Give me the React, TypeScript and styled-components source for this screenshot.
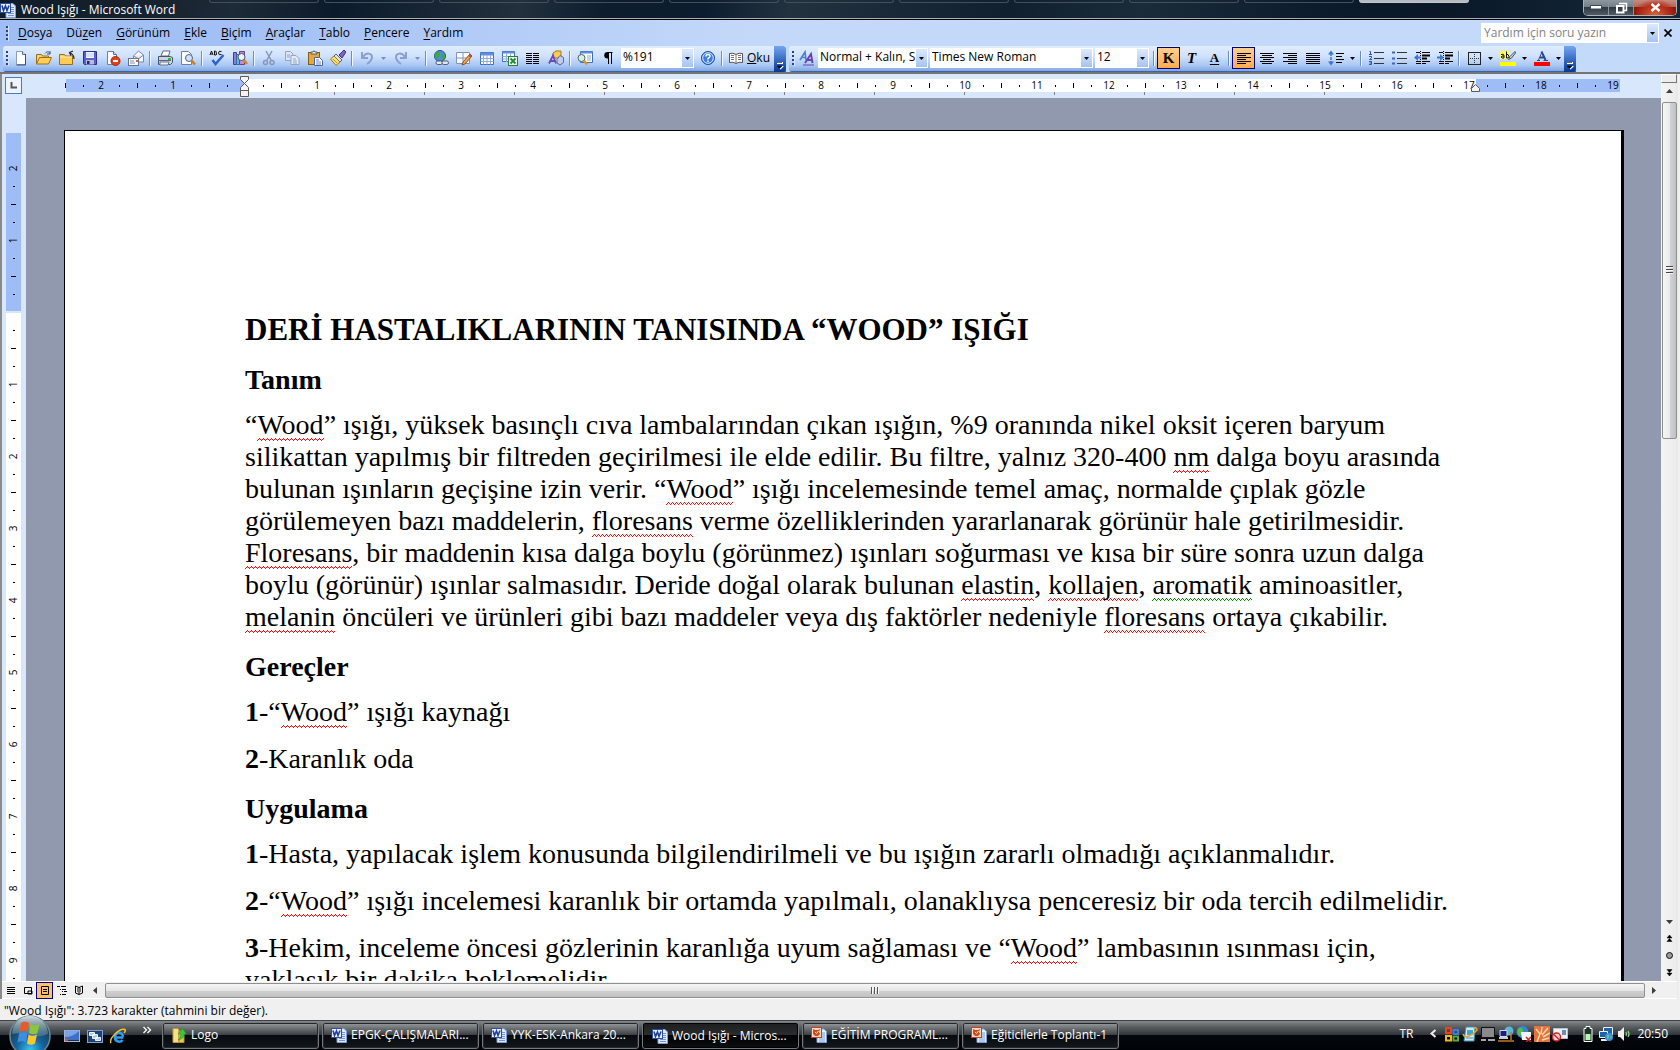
import React from "react";
import styled, { createGlobalStyle, css } from "styled-components";

const uiFont = '"Open Sans", "Noto Sans", sans-serif';
const docFont = '"Liberation Serif", "Times New Roman", serif';

const GlobalStyle = createGlobalStyle`
  *, *::before, *::after { box-sizing: border-box; }
  html, body { margin: 0; height: 100%; }
  body { font: 12px/16px ${uiFont}; color: #000; overflow: hidden; }
  button, input, select { font: inherit; color: inherit; margin: 0; padding: 0; border: 0; border-radius: 0; background: none; }
`;

const Desktop = styled.div`
  display: flex;
  flex-direction: column;
  height: 100vh;
  background: #f0f0f0;
`;

/* ---------- title bar ---------- */

const TitleBar = styled.header`
  display: flex;
  flex: none;
  height: 20px;
  align-items: flex-start;
  justify-content: space-between;
  border-bottom: 1px solid #000;
  box-shadow: inset 0 -1px #a4adb4;
  background: linear-gradient(100deg, #101c28 0, #16232f 9%, #1d2a37 14%, #0c1b2b 20%, #22303d 31%, #0d1d2e 36%, #0c1d2f 42%, #23323f 47%, #1a2937 53%, #10202f 60%, #1a2b39 68%, #0c1c2d 78%, #0a1828 86%, #16293a 100%);
`;

const TitleText = styled.h1`
  display: flex;
  align-items: center;
  gap: 5px;
  width: 209px;
  height: 19px;
  margin: 0;
  padding-top: 1px;
  font-size: 12px;
  line-height: 18px;
  font-weight: 400;
  color: #fff;
  white-space: nowrap;
`;

const GhostTabs = styled.div`
  display: flex;
  flex: 1;
  gap: 5px;
  overflow: hidden;
`;

const GhostTab = styled.span<{ $lit?: boolean }>`
  flex: 0 0 110px;
  height: 3px;
  border: 1px solid ${(p) => (p.$lit ? "#c3c8cc" : "#42505c")};
  border-top: 0;
  border-radius: 0 0 4px 4px;
  background: ${(p) => (p.$lit ? "#b4bac0" : "none")};
`;

const WindowButtons = styled.div`
  display: flex;
  margin-right: 3px;
  border: 1px solid #aab0b5;
  border-top: 0;
  border-radius: 0 0 5px 5px;
  overflow: hidden;
`;

const WindowButton = styled.button<{ $close?: boolean }>`
  display: flex;
  align-items: center;
  justify-content: center;
  width: ${(p) => (p.$close ? 42 : 25)}px;
  height: 15px;
  border-right: 1px solid #8b939a;
  background: ${(p) =>
    p.$close
      ? "radial-gradient(ellipse at 50% 100%, #e0633a 0, #b3301a 45%, transparent 75%), linear-gradient(#c98a80 0, #b3665b 45%, #8c1808 50%, #8a1406 100%)"
      : "linear-gradient(#8d979f 0, #737e87 45%, #2d3943 50%, #4f5b65 100%)"};
  &:last-child { border-right: 0; }
`;

/* ---------- menu ---------- */

const MenuBar = styled.nav`
  display: flex;
  flex: none;
  align-items: center;
  height: 26px;
  padding: 0 4px 0 6px;
  background: linear-gradient(90deg, #9ebef5 0, #a3c1f6 15%, #c4d9f9 45%, #c4dafa 100%);
`;

const Grip = styled.span`
  flex: none;
  width: 3px;
  height: 15px;
  background: repeating-linear-gradient(#27418e 0 2px, transparent 2px 4px);
  border-right: 1px solid #d5e4fb;
`;

const MenuList = styled.ul`
  display: flex;
  flex: 1;
  margin: 0;
  padding: 0 0 0 2px;
  list-style: none;
`;

const MenuItem = styled.button`
  padding: 0 7px;
  line-height: 20px;
  u { text-underline-offset: 2px; }
`;

const HelpBox = styled.label`
  display: flex;
  width: 178px;
  height: 20px;
  padding: 1px;
  background: #fff;
`;

const HelpInput = styled.input`
  flex: 1;
  min-width: 0;
  padding-left: 2px;
  outline: 0;
  &::placeholder { color: #838383; opacity: 1; }
`;

const CloseDoc = styled.button`
  display: flex;
  align-items: center;
  justify-content: center;
  width: 17px;
  height: 20px;
`;

/* ---------- toolbars ---------- */

const ToolbarRow = styled.div`
  display: flex;
  flex: none;
  height: 28px;
  padding-left: 3px;
  gap: 3px;
  background: linear-gradient(90deg, #a3c1f6, #c4dafa 50%);
  border-bottom: 2px solid #747474;
`;

const Toolbar = styled.div`
  display: flex;
  align-items: center;
  height: 26px;
  padding: 0 0 2px 3px;
  border-radius: 3px 0 0 3px;
  background: linear-gradient(#e0edff 0, #cfe1fc 40%, #a9c7f4 75%, #83a8e2 95%, #3a62ad 96%);
`;

const ToolButton = styled.button<{ $on?: boolean; $w?: number }>`
  display: flex;
  flex: none;
  align-items: center;
  justify-content: center;
  gap: 4px;
  width: ${(p) => p.$w ?? 23}px;
  height: 22px;
  ${(p) =>
    p.$on &&
    css`
      border: 1px solid #000080;
      background: linear-gradient(#ffd08d, #ffab4f);
    `}
`;

const DropButton = styled(ToolButton)`
  width: 11px;
`;

const Separator = styled.span`
  flex: none;
  width: 2px;
  height: 15px;
  margin: 0 2px;
  background: linear-gradient(90deg, #6a8ccb 50%, #f1f7ff 50%);
`;

const Options = styled.button`
  display: flex;
  flex: none;
  align-items: flex-end;
  align-self: flex-start;
  justify-content: center;
  width: 12px;
  height: 26px;
  padding-bottom: 2px;
  border-radius: 0 3px 3px 0;
  background: linear-gradient(#75a6f1, #3b6cc4 50%, #053995);
`;

const Combo = styled.label<{ $w: number; $lead?: boolean }>`
  display: grid;
  flex: none;
  grid-template-columns: 1fr 11px;
  align-items: center;
  width: ${(p) => p.$w}px;
  height: 20px;
  margin: 0 2px 0 ${(p) => (p.$lead ? 2 : 0)}px;
  padding: 1px;
  background: #fff;
  select, span { grid-row: 1; }
  select {
    grid-column: 1 / 3;
    width: 100%;
    height: 18px;
    padding: 0 11px 2px 1px;
    appearance: none;
    outline: 0;
    text-overflow: clip;
    text-align: left;
  }
`;

const ArrowBox = styled.span`
  display: flex;
  grid-column: 2;
  align-items: center;
  justify-content: center;
  width: 11px;
  height: 18px;
  background: linear-gradient(#dbe9fd, #a6c4f0);
  pointer-events: none;
`;

const SerifGlyph = styled.span<{ $style: "bold" | "italic" | "underline" }>`
  font: ${(p) => (p.$style === "italic" ? "italic" : "normal")} 700 ${(p) => (p.$style === "underline" ? 13 : 15)}px/18px
    ${docFont};
  text-decoration: ${(p) => (p.$style === "underline" ? "underline" : "none")};
  text-underline-offset: 2px;
`;

/* ---------- workspace ---------- */

const Workspace = styled.main`
  display: flex;
  flex: 1;
  min-height: 0;
  border-left: 2px solid #8a8a8a;
`;

const WorkColumn = styled.div`
  display: flex;
  flex: 1;
  flex-direction: column;
  min-width: 0;
`;

const RulerRow = styled.div`
  display: flex;
  flex: none;
  height: 24px;
  padding-top: 3px;
  background: #d8e7fc;
`;

const TabSelector = styled.button`
  flex: none;
  width: 17px;
  height: 17px;
  margin: 0 0 0 3px;
  border: 1px solid #4b78c8;
  background: #eef4fe;
  display: flex;
  align-items: center;
  justify-content: center;
`;

const HRuler = styled.div`
  position: relative;
  display: flex;
  width: 1560px;
  height: 18px;
  margin-left: 42px;
  padding-bottom: 5px;
  align-items: center;
  font: 10px/13px ${uiFont};
  background:
    repeating-linear-gradient(90deg, #808080 0 1px, transparent 1px 90px) 270px 15px / 1080px 3px no-repeat,
    linear-gradient(90deg, #9ebcf5 179px, #fff 179px 1410px, #9ebcf5 1410px) 2px 2px / 1554px 13px no-repeat;
`;

const Slots = styled.div<{ $vertical?: boolean }>`
  display: flex;
  flex-direction: ${(p) => (p.$vertical ? "column" : "row")};
  ${(p) => (p.$vertical ? "padding-top: 26px;" : "margin-left: -8px; padding-top: 4px;")}
`;

const Slot = styled.span<{ $vertical?: boolean }>`
  display: flex;
  flex: none;
  align-items: center;
  justify-content: center;
  width: ${(p) => (p.$vertical ? 15 : 18)}px;
  height: ${(p) => (p.$vertical ? 18 : 13)}px;
  b { font-weight: 400; ${(p) => p.$vertical && "transform: rotate(-90deg);"} }
`;

const Tick = styled.i<{ $long?: boolean; $vertical?: boolean }>`
  background: #000;
  width: ${(p) => (p.$vertical ? (p.$long ? 5 : 2) : 1)}px;
  height: ${(p) => (p.$vertical ? 1 : p.$long ? 5 : 2)}px;
`;

const Marker = styled.svg<{ $x: number; $y: number }>`
  position: absolute;
  left: ${(p) => p.$x}px;
  top: ${(p) => p.$y}px;
`;

const BodyRow = styled.div`
  display: flex;
  flex: 1;
  min-height: 0;
  overflow: hidden;
  background: #9199ae;
`;

const VRuler = styled.div`
  flex: none;
  width: 24px;
  padding: 35px 5px 0 4px;
  overflow: hidden;
  background: #d8e7fc;
  font: 10px/13px ${uiFont};
`;

const VStrip = styled.div`
  width: 15px;
  height: 100%;
  overflow: hidden;
  background: linear-gradient(#9ebcf5 178px, #d8e7fc 178px 180px, #fff 180px);
`;

const Page = styled.article`
  flex: 1;
  height: 1800px;
  margin: 32px 37px 0 38px;
  padding: 183px 148px 0 180px;
  border: 1px solid #000;
  border-right-width: 3px;
  background: #fff;
  font: 28px/32px ${docFont};
`;

const DocTitle = styled.h2`
  margin: 0 0 18px;
  font-size: 31px;
  line-height: 32px;
`;

const Heading = styled.h3`
  margin: 18px 0 13px;
  font-size: 28px;
  line-height: 32px;
`;

const Para = styled.p`
  margin: 0 0 15px;
`;

/* proofing underline: a three pixel high zigzag */
const Squiggle = styled.span<{ $grammar?: boolean }>`
  --c: ${(p) => (p.$grammar ? "#0a8a0a" : "#f01010")};
  padding-bottom: 1px;
  background:
    linear-gradient(90deg, transparent 2px, var(--c) 2px 3px, transparent 3px) 0 calc(100% - 2px) / 4px 1px repeat-x,
    linear-gradient(90deg, transparent 1px, var(--c) 1px 2px, transparent 2px 3px, var(--c) 3px) 0 calc(100% - 1px) / 4px 1px repeat-x,
    linear-gradient(90deg, var(--c) 1px, transparent 1px) 0 100% / 4px 1px repeat-x;
`;

/* ---------- scroll bars ---------- */

const VScroll = styled.div`
  display: flex;
  flex: none;
  flex-direction: column;
  width: 19px;
  padding-right: 3px;
  background: linear-gradient(90deg, #f4f4f4, #ececec 15px, #e4e4e4 16px, #f0f0f0 17px);
`;

const SplitBox = styled.span`
  height: 9px;
  border: 1px solid #777;
  border-top-color: #fff;
  border-left-color: #fff;
  background: #ececec;
`;

const ScrollButton = styled.button`
  display: flex;
  flex: none;
  align-items: center;
  justify-content: center;
  width: 16px;
  height: 17px;
`;

const VThumb = styled.div`
  display: flex;
  flex: none;
  align-items: center;
  justify-content: center;
  width: 15px;
  height: 337px;
  margin: 2px 0 0 1px;
  border: 1px solid #8f8f8f;
  border-radius: 2px;
  background: linear-gradient(90deg, #f6f6f6, #ebebeb 50%, #d2d3d6 52%, #c0c1c5);
`;

const Spring = styled.span`
  flex: 1;
`;

const BottomRow = styled.div`
  display: flex;
  flex: none;
  align-items: center;
  height: 18px;
  border-top: 1px solid #fff;
  border-bottom: 1px solid #fff;
  background: #f0f0f0;
`;

const ViewButton = styled.button<{ $on?: boolean }>`
  display: flex;
  flex: none;
  align-items: center;
  justify-content: center;
  width: 17px;
  height: 17px;
  ${(p) =>
    p.$on &&
    css`
      border: 1px solid #000080;
      background: #ffc06a;
    `}
`;

const HThumb = styled.div`
  display: flex;
  flex: 1;
  align-items: center;
  justify-content: center;
  height: 15px;
  margin-left: 2px;
  border: 1px solid #8f8f8f;
  border-radius: 2px;
  background: linear-gradient(#f6f6f6, #e6e6e6 50%, #cfcfcf 52%, #c2c2c4);
`;

const StatusBar = styled.footer`
  flex: none;
  height: 21px;
  padding: 4px 4px 0;
  background: #f0f0f0;
`;

/* ---------- task bar ---------- */

const TaskBar = styled.div`
  position: relative;
  display: flex;
  flex: none;
  align-items: flex-start;
  height: 30px;
  padding: 1px 12px 0 64px;
  border-top: 1px solid #3d4144;
  background: linear-gradient(#85898c 0, #5a5e61 20%, #30353a 48%, #04080e 50%, #000408 100%);
  color: #fff;
`;

const StartButton = styled.button`
  position: absolute;
  left: 9px;
  top: -6px;
`;

const QuickLaunch = styled.div`
  display: flex;
  align-items: center;
  gap: 7px;
  width: 98px;
  height: 27px;
  flex: none;
`;

const MoreButton = styled.button`
  display: flex;
  align-self: flex-start;
  padding: 4px 0 0 9px;
`;

const Task = styled.button<{ $active?: boolean }>`
  display: flex;
  flex: 0 0 157px;
  align-items: center;
  gap: 4px;
  height: 27px;
  margin-right: 3px;
  padding: ${(p) => (p.$active ? "1px 8px 0 9px" : "0 8px 2px")};
  border: 1px solid #75797c;
  border-radius: 3px;
  box-shadow: inset 0 0 0 1px ${(p) => (p.$active ? "#000" : "#24282c")};
  background: ${(p) =>
    p.$active
      ? "linear-gradient(#1c1e20, #2a2c2e 48%, #000 50%, #0c0e10)"
      : "linear-gradient(#9a9d9f 0, #66696c 25%, #3a3f44 48%, #070b10 50%, #12171c 100%)"};
  white-space: nowrap;
  text-align: left;
  span { overflow: hidden; }
`;

const Tray = styled.div`
  display: flex;
  align-items: center;
  gap: 2px;
  height: 23px;
  margin-left: auto;
`;

const TrayText = styled.span<{ $gap: number }>`
  margin-right: ${(p) => p.$gap}px;
`;

const TrayGap = styled.span<{ $w: number }>`
  width: ${(p) => p.$w}px;
`;

/* ---------- icons ---------- */

type IconProps = { children: React.ReactNode; w?: number; h?: number };
const Icon = ({ children, w = 16, h = 16 }: IconProps) => (
  <svg width={w} height={h} viewBox={`0 0 ${w} ${h}`} aria-hidden="true">
    {children}
  </svg>
);

const Arrow = ({ color = "#000" }: { color?: string }) => (
  <Icon w={5} h={3}>
    <path d="M0 0h5L2.500 3z" fill={color} />
  </Icon>
);

const WordIcon = () => (
  <Icon>
    <path d="M6 1.500h7l2.500 2.500v11.500H6z" fill="#dfe9fa" stroke="#7d9fd8" />
    <path d="M10 5.500h4M10 7.500h4M10 9.500h4M8 11.500h6M8 13.500h6" stroke="#6f93d6" />
    <rect x=".5" y="1.500" width="10" height="9" fill="#e9f0fc" stroke="#2a4fa2" />
    <path d="M2 3.500l1.500 5L5.500 4l1.500 4.500L9 3.500" fill="none" stroke="#1d3f98" strokeWidth="1.600" />
  </Icon>
);

const PowerPointIcon = () => (
  <Icon>
    <path d="M6 2h7l2.500 2.500V15.500H6z" fill="#e6eefb" stroke="#7d9fd8" />
    <path d="M11 6h3M11 8h3M11 10h3M8 12h6M8 14h6" stroke="#7d9fd8" />
    <rect x=".5" y=".5" width="10" height="10" fill="#f8d8c4" stroke="#c4431c" />
    <path d="M2 2l2 1h3l2-1-1 3 1 2-2 2H4L2 7z" fill="#d2491b" />
    <path d="M4 5l1.500 1.500L7.500 4" fill="none" stroke="#ffe1cf" />
  </Icon>
);

const NewDoc = () => (
  <Icon>
    <path d="M3.500 1.500h6l3 3v10h-9z" fill="#fdfeff" stroke="#8b9cc0" />
    <path d="M9.500 1.500v3h3" fill="#cfdcf2" stroke="#5b6f9b" />
    <path d="M12.500 4v11h-9" fill="none" stroke="#3c4d77" />
  </Icon>
);

const OpenFolder = () => (
  <Icon>
    <path d="M.5 13.500v-9h5l1 1.500h6v3" fill="#f8d36d" stroke="#9c6f16" />
    <path d="M.5 14l3-6.500h12l-3 6.500z" fill="#ffcf56" stroke="#9c6f16" />
    <path d="M9 3.500c2-2.500 4-2 5 0m0-2.500v3h-3" fill="none" stroke="#36517e" />
  </Icon>
);

const UpFolder = () => (
  <Icon>
    <path d="M.5 14.500v-10h5l1 1.500h7v8.500z" fill="#fccb55" stroke="#9c6f16" />
    <path d="M1 7h12" stroke="#fff0b8" />
    <path d="M15 9c0-3-1-5-4-6m3-2l-3.500 1.500L12 5.500" fill="none" stroke="#222" strokeWidth="1.200" />
  </Icon>
);

const Save = () => (
  <Icon>
    <path d="M1.500 1.500h13v13h-12l-1-1z" fill="#5a5fd0" stroke="#2e2f8c" />
    <rect x="4" y="2" width="8" height="6" fill="#f2f4ff" />
    <path d="M4 4h8M4 6h8" stroke="#c3c9ea" />
    <rect x="4" y="10" width="8" height="4.500" fill="#b8bcd8" />
    <rect x="5" y="11" width="2.500" height="3" fill="#26285e" />
  </Icon>
);

const Permission = () => (
  <Icon>
    <path d="M2.500 1.500h6l3 3v10h-9z" fill="#fbfcff" stroke="#6d7fa8" />
    <path d="M8.500 1.500v3h3" fill="#cfdcf2" stroke="#5b6f9b" />
    <circle cx="10.500" cy="11" r="4.500" fill="#e2431f" stroke="#a3260b" />
    <rect x="8" y="10" width="5" height="2" fill="#fff" />
  </Icon>
);

const Mail = () => (
  <Icon>
    <path d="M5.500 6l5-5 5 4v7h-10z" fill="#f6f8fd" stroke="#7c88a3" />
    <path d="M5.500 6l5 3 5-4" fill="#dfe6f4" stroke="#7c88a3" />
    <rect x=".5" y="8.500" width="10" height="7" fill="#fff" stroke="#66728f" />
    <path d="M2 11h4M2 13h5" stroke="#8290b0" />
    <rect x="8" y="10" width="2" height="2" fill="#e35a2b" />
  </Icon>
);

const Printer = () => (
  <Icon>
    <path d="M4 6l2-5h7l-1.500 5z" fill="#fff" stroke="#5b6781" />
    <path d="M1.500 6.500h12l2 1v5l-2 2h-12z" fill="#cdd3df" stroke="#4a546b" />
    <path d="M2 10.500h12" stroke="#5d667c" />
    <path d="M3 12h9l-1 3H3z" fill="#f2f4f8" stroke="#6a748b" />
    <rect x="11" y="8" width="3" height="2" fill="#31b345" />
  </Icon>
);

const Preview = () => (
  <Icon>
    <path d="M1.500 1.500h7l3 3v10h-10z" fill="#fbfcff" stroke="#6d7fa8" />
    <circle cx="9" cy="8" r="3.500" fill="#cfe4f7" stroke="#5a6478" />
    <path d="M11.500 10.500l3.500 4" stroke="#c9801e" strokeWidth="2.500" />
  </Icon>
);

const Spelling = () => (
  <Icon>
    <path d="M1 5l1.500-4L4 5M1.500 4h2M5.500 1v4h1.500q1.500-1 0-2 1-1-.5-2zM12.500 1.500q-3-1-3 1.500t3 1.500" fill="none" stroke="#111" />
    <path d="M3.500 10l3 4 8-9" fill="none" stroke="#2f62c8" strokeWidth="2.500" />
  </Icon>
);

const Research = () => (
  <Icon>
    <path d="M1.500 2.500h3v12h-3z" fill="#8f7be0" stroke="#4a3a9e" />
    <path d="M4.500 4.500h3v10h-3z" fill="#63b6e0" stroke="#2d6e9c" />
    <path d="M7.500 1.500h5v13h-5z" fill="#c78ad0" stroke="#703d84" />
    <circle cx="9.500" cy="7" r="3.500" fill="#e9f3fc" stroke="#4f5870" />
    <path d="M12 10l3 4" stroke="#d08b1d" strokeWidth="2.500" />
  </Icon>
);

const Cut = () => (
  <Icon>
    <path d="M5 1l5 9M11 1L6 10" stroke="#8796b8" strokeWidth="1.500" />
    <circle cx="4.500" cy="12.500" r="2" fill="none" stroke="#8796b8" strokeWidth="1.500" />
    <circle cx="11" cy="12.500" r="2" fill="none" stroke="#8796b8" strokeWidth="1.500" />
  </Icon>
);

const Copy = () => (
  <Icon>
    <path d="M1.500 1.500h5l2.500 2.500v6.500h-7.500z" fill="#dbe5f6" stroke="#94a3c4" />
    <path d="M7 5.500h5l3 3v6H7z" fill="#e4ecf9" stroke="#94a3c4" />
    <path d="M9 9h3M9 11h4M9 13h4M3 5h3M3 7h3" stroke="#94a3c4" />
  </Icon>
);

const Paste = () => (
  <Icon>
    <rect x="1.500" y="2.500" width="11" height="12" fill="#e5a93a" stroke="#8a5a10" />
    <path d="M4 4V2h2q1-2.500 2 0h2v2z" fill="#e9edf4" stroke="#505c74" />
    <path d="M7.500 7.500h5l3 3v5h-8z" fill="#fff" stroke="#4d66a0" />
    <path d="M9 10h3M9 12h5M9 14h5" stroke="#6d87c0" />
  </Icon>
);

const Painter = () => (
  <Icon>
    <path d="M9 5l5-5 2 2-4 6z" fill="#7a64c4" stroke="#433285" />
    <path d="M6 4l6 6-2 2-6-6z" fill="#dfe3ea" stroke="#5c6474" />
    <path d="M4 6l6 6-4 3.500L.5 9z" fill="#f5df78" stroke="#9a7b1d" />
    <path d="M3 9l4 4" stroke="#b89a36" />
  </Icon>
);

const Undo = ({ redo }: { redo?: boolean }) => (
  <Icon>
    <g transform={redo ? "translate(16 0) scale(-1 1)" : undefined} fill="none" stroke="#8ba0cf" strokeWidth="2">
      <path d="M3 2v6h6" />
      <path d="M4 7c3-5 9-4 9 0 0 3-2 5-5 7" />
    </g>
  </Icon>
);

const Hyperlink = () => (
  <Icon>
    <circle cx="7" cy="6" r="5.500" fill="#4b8fd8" stroke="#245089" />
    <path d="M3 2.500q4-2 4 1T3 9Q0 6 3 2.500M8 5l4-1v4l-3 2z" fill="#3fa64a" />
    <rect x="3" y="11" width="6.500" height="3.500" rx="1.700" fill="#e3e8f0" stroke="#4f5b73" />
    <rect x="9" y="11" width="6.500" height="3.500" rx="1.700" fill="#e3e8f0" stroke="#4f5b73" />
  </Icon>
);

const DrawTable = () => (
  <Icon>
    <path d="M.5 2.500h13v11H.5z" fill="#fff" stroke="#7c93c8" />
    <path d="M7 2.500v11M.5 8h13" stroke="#7c93c8" />
    <path d="M14 4l2 2-7 8-3 1 1-3z" fill="#f1a63c" stroke="#93501a" />
    <path d="M13 5l2 2" stroke="#b94a5e" strokeWidth="2" />
  </Icon>
);

const Table = () => (
  <Icon>
    <path d="M1.500 2.500h13v12h-13z" fill="#fff" stroke="#3f6cc2" />
    <path d="M1.500 2.500h13v3h-13z" fill="#5f8de0" />
    <path d="M1.500 8.500h13M1.500 11.500h13M4.500 5v9.500M8 5v9.500M11.500 5v9.500" stroke="#8faae0" />
  </Icon>
);

const ExcelTable = () => (
  <Icon>
    <path d="M.5 1.500h12v10H.5z" fill="#fff" stroke="#3f6cc2" />
    <path d="M.5 1.500h12v2H.5z" fill="#5f8de0" />
    <path d="M.5 6.500h12M.5 9h12M4.500 3v9M8.500 3v9" stroke="#8faae0" />
    <rect x="6.500" y="6.500" width="9" height="9" fill="#eaf6ea" stroke="#2a8038" />
    <path d="M8.500 8.500l5 5M13.500 8.500l-5 5" stroke="#238a35" strokeWidth="1.800" />
  </Icon>
);

const Columns = () => (
  <Icon>
    <path d="M1 3.500h6M1 5.500h6M1 7.500h6M1 9.500h6M1 11.500h6M1 13.500h6M8 3.500h6M8 5.500h6M8 7.500h6M8 9.500h6M8 11.500h6M8 13.500h6" stroke="#000" />
  </Icon>
);

const Drawing = () => (
  <Icon>
    <path d="M5 3l3-2h5v5l-2 2H5z" fill="#f5cb5b" stroke="#a77a1b" />
    <path d="M9 9.500l3-4 3.500 2v5L12 15l-3-2z" fill="#c4cbe6" stroke="#5e6894" />
    <path d="M1 13.500l4-8 3 8M2.500 11h4" fill="none" stroke="#6b49b4" strokeWidth="1.800" />
  </Icon>
);

const DocMap = () => (
  <Icon>
    <path d="M3.500 1.500h12v11h-12z" fill="#fff" stroke="#3f6cc2" />
    <path d="M3.500 1.500h12v2h-12z" fill="#5f8de0" />
    <path d="M10 6h4M10 8h4M10 10h4" stroke="#8fa6d0" />
    <circle cx="4.500" cy="8" r="3.500" fill="#d8f0e4" stroke="#4c6a68" />
    <path d="M7 10.500l3 4" stroke="#d59a1e" strokeWidth="2.500" />
  </Icon>
);

const Pilcrow = () => (
  <Icon>
    <path d="M8.500 14V2.500h4M11.500 14V2" fill="none" stroke="#000" />
    <path d="M9 2H7.500a3.200 3.200 0 0 0 0 6.500H9z" />
  </Icon>
);

const Help = () => (
  <Icon>
    <circle cx="8" cy="8" r="6.500" fill="#3f7ee0" stroke="#1c4ea6" />
    <circle cx="8" cy="8" r="5.300" fill="none" stroke="#dbe8ff" />
    <path d="M6 6.500q0-2 2-2t2 1.800Q10 7.500 8 8.500v1M8 10.500v1.500" fill="none" stroke="#fff" strokeWidth="1.500" />
  </Icon>
);

const Book = () => (
  <Icon w={14}>
    <path d="M7 4.500Q4 2.500.5 3.500v9q3.500-1 6.500 1 3-2 6.500-1v-9Q10 2.500 7 4.500z" fill="#fff" stroke="#555" />
    <path d="M7 4.500v9M2 5.500h3M2 7.500h3M2 9.500h3M9 5.500h3M9 7.500h3M9 9.500h3" stroke="#777" />
  </Icon>
);

const Styles = () => (
  <Icon>
    <path d="M1 10L6 2l1 8M3.500 7.500h3" fill="none" stroke="#4a7fce" strokeWidth="1.600" />
    <path d="M6 13l6-9 1.500 9M8.500 10h5" fill="none" stroke="#6a41b0" strokeWidth="1.900" />
    <path d="M4 15h11" stroke="#6a41b0" />
  </Icon>
);

const alignPaths = {
  left: "M1 3.500h14M1 5.500h9M1 7.500h14M1 9.500h9M1 11.500h14M1 13.500h9",
  center: "M1 3.500h14M3 5.500h10M1 7.500h14M4 9.500h8M1 11.500h14M3 13.500h10",
  right: "M1 3.500h14M6 5.500h9M1 7.500h14M6 9.500h9M1 11.500h14M6 13.500h9",
  justify: "M1 3.500h14M1 5.500h14M1 7.500h14M1 9.500h14M1 11.500h14M1 13.500h14",
};
const Align = ({ kind }: { kind: keyof typeof alignPaths }) => (
  <Icon>
    <path d={alignPaths[kind]} stroke="#000" />
  </Icon>
);

const LineSpacing = () => (
  <Icon>
    <path d="M3 3v10" stroke="#3f74d4" strokeDasharray="3 1" strokeWidth="1.500" />
    <path d="M0 4.500L3 .5l3 4zM0 11.500l3 4 3-4z" fill="#3f74d4" />
    <path d="M8 3.500h8M8 6.500h6M8 9.500h8M8 12.500h6" stroke="#000" />
  </Icon>
);

const Numbering = () => (
  <Icon>
    <path d="M1.500 1.500h1v3M1 4.500h3M1 6.500h2.500v1.500L1.500 9.500h2.500M1 11.500h2.500v3H1M1.500 13h2" fill="none" stroke="#2f56a8" />
    <path d="M6 2.500h10M6 8.500h10M6 13.500h10" stroke="#333" />
  </Icon>
);

const Bullets = () => (
  <Icon>
    <path d="M1 1.500h3v2H1zM1 7.500h3v2H1zM1 12.500h3v2H1z" fill="#3f66b8" />
    <path d="M6 2.500h10M6 8.500h10M6 13.500h10" stroke="#333" />
  </Icon>
);

const Indent = ({ out }: { out?: boolean }) => (
  <Icon>
    <path d="M2 2.500h4M2 13.500h4M2 11.500h4M8 2.500h8M8 13.500h4M8 11.500h8" stroke="#000" />
    <path d="M8 5.500h8M8 8.500h5" stroke="#000" strokeWidth="2" />
    <path d="M6.500 1v14" stroke="#000" strokeDasharray="1 1" />
    <path d={out ? "M4 4L0 7.500 4 11V8.500h3v-2H4z" : "M3 4l4 3.500L3 11V8.500H0v-2h3z"} fill="#3f74d4" />
  </Icon>
);

const Border = () => (
  <Icon>
    <rect x="2.500" y="2.500" width="12" height="12" fill="none" stroke="#222" />
    <path d="M4 8.500h10M8.500 4v10" stroke="#333" strokeDasharray="1 1" />
  </Icon>
);

const Highlight = () => (
  <Icon>
    <path d="M0 1h10v8H0z" fill="#ffff5a" />
    <path d="M1 4.500q3-1 3 1V8H2Q.500 7 2 6h2M6.500 1.500V8h1.500q2-1.500 0-3.500H6.500" fill="none" stroke="#111" />
    <path d="M15 1.500l-5 5-1.500 3L11.500 8l4-5z" fill="#cfd6e4" stroke="#46506a" />
    <path d="M0 12h16v4H0z" fill="#ff0" />
  </Icon>
);

const FontColor = () => (
  <Icon>
    <path d="M3 10.500h3M9.500 10.500h4.500M4.500 10L8 2" fill="none" stroke="#2c4a92" />
    <path d="M7.500 1.500L11.500 10M6 7.500h4" fill="none" stroke="#2c4a92" strokeWidth="2" />
    <path d="M0 12h16v4H0z" fill="red" />
  </Icon>
);

const OptionsMark = () => (
  <Icon w={8} h={9}>
    <path d="M1 1h6v2H1zM1 5h7L4.500 8.500z" fill="#fff" />
    <path d="M1 1.500h5M1 5h5L3.500 7.500z" fill="#000" stroke="#000" strokeWidth=".6" />
  </Icon>
);

const Cross = ({ color = "#000" }: { color?: string }) => (
  <Icon w={8} h={8}>
    <path d="M.5.500l7 7M7.500.500l-7 7" stroke={color} strokeWidth="1.700" />
  </Icon>
);

const Triangle = ({ dir }: { dir: "up" | "down" | "left" | "right" }) => {
  const d = { up: "M1 6h7L4.500 2z", down: "M1 3h7L4.500 7z", left: "M6 1v7L2 4.500z", right: "M3 1v7l4-3.500z" }[dir];
  return (
    <Icon w={9} h={9}>
      <path d={d} fill="#3c3c3c" />
    </Icon>
  );
};

const PageJump = ({ kind }: { kind: "prev" | "browse" | "next" }) => (
  <Icon w={9} h={9}>
    {kind === "browse" ? (
      <circle cx="4.500" cy="4.500" r="3" fill="#9a9a9a" stroke="#111" />
    ) : (
      <path
        transform={kind === "next" ? "translate(0 9) scale(1 -1)" : undefined}
        d="M4.500 1L2 4h5zM4.500 4.500L2 7.500h5z"
        fill="#000"
        stroke="#000"
        strokeWidth=".5"
      />
    )}
  </Icon>
);

const views = [
  { label: "Normal Görünüm", d: "M1 2.500h8M1 4.500h8M1 6.500h8M1 8.500h8" },
  { label: "Web Düzeni", d: "M1.500 2.500h7v6h-7zM5 6h4v3H5z" },
  { label: "Yazdırma Düzeni", d: "M1.500 1.500h7v8h-7zM3 4.500h4M3 6.500h4" },
  { label: "Anahat", d: "M0 1.500h3M4 1.500h5M3 4.500h1M5 4.500h4M5 6.500h1M7 6.500h3M3 9.500h1M5 9.500h4" },
  { label: "Okuma Düzeni", d: "M5 2.500L1.500 1v7L5 9.500 8.500 8V1zM5 2.500v7M3 4h1M6 4h1M3 6h1M6 6h1" },
];

const StartOrb = () => (
  <Icon w={42} h={36}>
    <defs>
      <radialGradient id="orb" cx="50%" cy="85%" r="75%">
        <stop offset="0" stopColor="#39c4f5" />
        <stop offset=".45" stopColor="#14639c" />
        <stop offset="1" stopColor="#1b3340" />
      </radialGradient>
      <linearGradient id="gloss" x2="0" y2="1">
        <stop offset="0" stopColor="#e4eef3" stopOpacity=".9" />
        <stop offset="1" stopColor="#8fb0c0" stopOpacity=".3" />
      </linearGradient>
    </defs>
    <circle cx="21" cy="21" r="20" fill="url(#orb)" stroke="#6d8591" strokeWidth="1.500" />
    <path d="M3 19a18 18 0 0 1 36 0q-9 4-18 1T3 19z" fill="url(#gloss)" />
    <path d="M12 8q4-2.500 8 0l-1.500 9q-4-2.500-8 0z" fill="#e8592b" />
    <path d="M21.500 9q4 2.500 9 0l-2 9q-4 2.500-8.500 0z" fill="#8cc63f" />
    <path d="M10 18.500q4-2.500 8.500 0l-1.500 9q-4-2.500-8.500 0z" fill="#3d8ede" />
    <path d="M19.500 19.500q4.500 2.500 8.500 0l-2 9q-4 2.500-8 0z" fill="#fcc62f" />
  </Icon>
);

const ShowDesktop = () => (
  <Icon>
    <rect x=".5" y="2.500" width="15" height="11" fill="#3f6fc4" stroke="#9fb8dd" />
    <path d="M1 9q8 0 14-6v-.5H1z" fill="#7aa4e6" />
    <path d="M1 12.500h14" stroke="#1d2f55" />
    <circle cx="2.500" cy="12" r="1.500" fill="#e4572b" />
  </Icon>
);

const SwitchWindows = () => (
  <Icon>
    <rect x=".5" y="2.500" width="15" height="12" fill="#1e4177" stroke="#7fa0cf" />
    <path d="M2.500 4.500h5v3h-5zM5.500 6.500h5v4h-5zM8.500 9.500h5v3h-5z" fill="#a9c8ee" stroke="#eef5ff" />
  </Icon>
);

const Explorer = () => (
  <Icon>
    <path d="M13.500 9.500H5.500M5 9a4 4 0 0 1 8-.5M5 9a4.200 4.200 0 0 0 7.500 3" fill="none" stroke="#2d9df0" strokeWidth="2.600" />
    <path d="M1 15Q-1 12 5 6t10-4.500q1 1-1 3.500" fill="none" stroke="#f6c02c" strokeWidth="1.500" />
  </Icon>
);

const FolderTask = () => (
  <Icon>
    <path d="M2 1.500h5l1 2v12H2z" fill="#f7df83" stroke="#c39b36" />
    <path d="M8 4h5v11.500H8z" fill="#ecc75c" stroke="#b98f2c" />
    <path d="M7 13q3-2 2.500-6H7l4.500-5.500L15.500 7H13q0 5-6 6z" fill="#3cc43f" stroke="#1f8f2a" strokeWidth=".5" />
  </Icon>
);

const trayIcons: { name: string; art: React.ReactNode }[] = [
  {
    name: "Office",
    art: (
      <g fill="none" strokeWidth="2">
        <path d="M2 2h5v5H2z" stroke="#e8451c" />
        <path d="M9.500 4H14v4H9.500z" stroke="#3f7be0" />
        <path d="M2 10h5v4.500H2z" stroke="#f2b51e" />
        <path d="M9.500 10.500H14v4H9.500z" stroke="#5cab35" />
      </g>
    ),
  },
  {
    name: "Eşitleme",
    art: (
      <>
        <path d="M4 1h9l-1 14H2z" fill="#cfeaf5" stroke="#3c93b5" />
        <path d="M5 4h6v5H5z" fill="#3ba7cf" />
        <path d="M4 12h7" stroke="#3c93b5" />
        <path d="M1 8q1 4 6 2t8-6q0-3-4-2" fill="none" stroke="#efa02a" strokeWidth="1.500" />
      </>
    ),
  },
  {
    name: "Ekran",
    art: (
      <>
        <path d="M1.500 1.500h13v10h-13z" fill="#8a8a8a" stroke="#111" />
        <path d="M1 13h5v2H1zM8 13h7v2H8z" fill="#a5a5a5" />
      </>
    ),
  },
  {
    name: "Bağlantı",
    art: (
      <>
        <circle cx="11" cy="5" r="4.500" fill="#58b8d8" />
        <path d="M2 4.500h7v6H2z" fill="#12208f" stroke="#dcdcdc" />
        <path d="M1 12h9" stroke="#ccc" strokeWidth="2" />
        <path d="M0 15h16M13 6v8" stroke="#c47a1c" strokeWidth="1.500" />
      </>
    ),
  },
  {
    name: "İnternet",
    art: (
      <>
        <circle cx="6.500" cy="6" r="6" fill="#3a84d4" />
        <path d="M2 3q4-3 5 1T3 10Q0 6 2 3" fill="#55bb52" />
        <path d="M5 6h10v8H6z" fill="#f4f7fb" />
        <path d="M10 11l5 5M15 11l-5 5" stroke="#d81e1e" strokeWidth="1.500" />
      </>
    ),
  },
  {
    name: "El",
    art: (
      <>
        <path d="M0 0h16v16H0z" fill="#e2733a" />
        <path d="M3 16L6 8 2 3M7 8L8 1M8 9l6-7M9 11l7-4M8 14l7-2" stroke="#fbd6ae" strokeWidth="1.500" fill="none" />
      </>
    ),
  },
  {
    name: "Güvenlik",
    art: (
      <>
        <path d="M1.500 2.500h14v10h-14z" fill="#eef1f5" stroke="#b9c1cc" />
        <path d="M10 4h4v5h-4z" fill="#6c8cb0" />
        <circle cx="4.500" cy="11" r="4" fill="#f6dada" stroke="#d62222" strokeWidth="1.500" />
        <path d="M2 8.500l5 5" stroke="#d62222" strokeWidth="1.500" />
      </>
    ),
  },
];

const systemIcons: { name: string; art: React.ReactNode }[] = [
  {
    name: "Pil",
    art: (
      <>
        <path d="M6 .5h4v2h2v13H4v-13h2z" fill="#1d3526" stroke="#fff" />
        <path d="M5.500 8h5v6h-5z" fill="#b9f5b4" />
      </>
    ),
  },
  {
    name: "Ağ",
    art: (
      <>
        <path d="M5.500 1.500h9v7h-9z" fill="#1f62a8" stroke="#e9f2fa" />
        <path d="M1.500 5.500h8v6h-8z" fill="#1f62a8" stroke="#e9f2fa" />
        <path d="M3 14h6" stroke="#e9f2fa" strokeWidth="2" />
        <circle cx="11" cy="11" r="4" fill="#3f8fe0" />
        <path d="M9 9q3-1 2 2t-2 2zM12 10l2 1-1 2z" fill="#6dcf4e" />
      </>
    ),
  },
  {
    name: "Ses",
    art: (
      <>
        <path d="M2 5h2l4-4v14l-4-4H2z" fill="#f0f0f0" />
        <path d="M10 6q1 2 0 4M12 5q2 3 0 6" fill="none" stroke="#8fd489" strokeWidth="1.200" />
      </>
    ),
  },
];

/* ---------- content ---------- */

const menus: [string, string, string][] = [
  ["", "D", "osya"],
  ["Dü", "z", "en"],
  ["", "G", "örünüm"],
  ["", "E", "kle"],
  ["", "B", "içim"],
  ["", "A", "raçlar"],
  ["", "T", "ablo"],
  ["", "P", "encere"],
  ["", "Y", "ardım"],
];

const toolGroups: [string, React.ReactNode][][] = [
  [
    ["Yeni", <NewDoc />],
    ["Aç", <OpenFolder />],
    ["Yukarı", <UpFolder />],
    ["Kaydet", <Save />],
    ["İzin", <Permission />],
    ["E-posta", <Mail />],
  ],
  [
    ["Yazdır", <Printer />],
    ["Baskı Önizleme", <Preview />],
  ],
  [
    ["Yazım Denetimi", <Spelling />],
    ["Araştır", <Research />],
  ],
  [
    ["Kes", <Cut />],
    ["Kopyala", <Copy />],
    ["Yapıştır", <Paste />],
    ["Biçim Boyacısı", <Painter />],
  ],
];

const insertTools: [string, React.ReactNode][] = [
  ["Köprü", <Hyperlink />],
  ["Tablolar ve Kenarlıklar", <DrawTable />],
  ["Tablo Ekle", <Table />],
  ["Excel Çalışma Sayfası", <ExcelTable />],
  ["Sütunlar", <Columns />],
  ["Çizim", <Drawing />],
];

const tasks: { text: string; icon: React.ReactNode; active?: boolean }[] = [
  { text: "Logo", icon: <FolderTask /> },
  { text: "EPGK-ÇALIŞMALARI...", icon: <WordIcon /> },
  { text: "YYK-ESK-Ankara 20...", icon: <WordIcon /> },
  { text: "Wood Işığı - Micros...", icon: <WordIcon />, active: true },
  { text: "EĞİTİM PROGRAML...", icon: <PowerPointIcon /> },
  { text: "Eğiticilerle Toplantı-1", icon: <PowerPointIcon /> },
];

const Tool = ({ label, children, on, w }: { label: string; children: React.ReactNode; on?: boolean; w?: number }) => (
  <ToolButton type="button" aria-label={label} aria-pressed={on} $on={on} $w={w}>
    {children}
  </ToolButton>
);

const Drop = ({ label, color }: { label: string; color?: string }) => (
  <DropButton type="button" aria-label={label}>
    <Arrow color={color} />
  </DropButton>
);

const ComboBox = ({ label, value, w, lead }: { label: string; value: string; w: number; lead?: boolean }) => (
  <Combo $w={w} $lead={lead}>
    <select aria-label={label} defaultValue={value}>
      <option>{value}</option>
    </select>
    <ArrowBox>
      <Arrow />
    </ArrowBox>
  </Combo>
);

/* quarter-unit slots: a number, a dot, a half mark, a dot */
const RulerSlots = ({ from, to, vertical }: { from: number; to: number; vertical?: boolean }) => (
  <Slots $vertical={vertical}>
    {Array.from({ length: to - from + 1 }, (_, i) => from + i).map((k) => (
      <Slot key={k} $vertical={vertical}>
        {k === 0 ? null : k % 4 === 0 ? <b>{Math.abs(k / 4)}</b> : <Tick $long={k % 2 === 0} $vertical={vertical} />}
      </Slot>
    ))}
  </Slots>
);

const S = ({ children, g }: { children: string; g?: boolean }) => <Squiggle $grammar={g}>{children}</Squiggle>;

export default function App() {
  return (
    <Desktop>
      <GlobalStyle />
      <TitleBar>
        <TitleText>
          <WordIcon />
          Wood Işığı - Microsoft Word
        </TitleText>
        <GhostTabs>
          {Array.from({ length: 11 }, (_, i) => (
            <GhostTab key={i} $lit={i === 10} />
          ))}
        </GhostTabs>
        <WindowButtons>
          <WindowButton type="button" aria-label="Simge Durumuna Küçült">
            <Icon w={12} h={5}>
              <path d="M.5.500h11v3.500H.5z" fill="#fff" stroke="#3d4852" />
            </Icon>
          </WindowButton>
          <WindowButton type="button" aria-label="Önceki Boyut">
            <Icon w={13} h={12}>
              <path d="M4 1.500h7.500v7H9" fill="none" stroke="#fff" strokeWidth="1.500" />
              <path d="M2 4h6.500v6.500H2z" fill="none" stroke="#fff" strokeWidth="2" />
            </Icon>
          </WindowButton>
          <WindowButton type="button" aria-label="Kapat" $close>
            <Icon w={11} h={9}>
              <path d="M1.500 1l8 7M9.500 1l-8 7" stroke="#fff" strokeWidth="2.500" />
            </Icon>
          </WindowButton>
        </WindowButtons>
      </TitleBar>

      <MenuBar>
        <Grip />
        <MenuList>
          {menus.map(([a, u, b]) => (
            <li key={a + u + b}>
              <MenuItem type="button">
                {a}
                <u>{u}</u>
                {b}
              </MenuItem>
            </li>
          ))}
        </MenuList>
        <HelpBox>
          <HelpInput type="text" aria-label="Yardım" placeholder="Yardım için soru yazın" />
          <ArrowBox>
            <Arrow />
          </ArrowBox>
        </HelpBox>
        <CloseDoc type="button" aria-label="Pencereyi Kapat">
          <Cross />
        </CloseDoc>
      </MenuBar>

      <ToolbarRow>
        <Toolbar role="toolbar" aria-label="Standart">
          <Grip />
          {toolGroups.map((group, i) => (
            <React.Fragment key={i}>
              {group.map(([label, icon]) => (
                <Tool key={label} label={label}>
                  {icon}
                </Tool>
              ))}
              <Separator />
            </React.Fragment>
          ))}
          <Tool label="Geri Al">
            <Undo />
          </Tool>
          <Drop label="Geri alma listesi" color="#7d8db5" />
          <Tool label="Yinele">
            <Undo redo />
          </Tool>
          <Drop label="Yineleme listesi" color="#7d8db5" />
          <Separator />
          {insertTools.map(([label, icon]) => (
            <Tool key={label} label={label}>
              {icon}
            </Tool>
          ))}
          <Separator />
          <Tool label="Belge Bağlantıları">
            <DocMap />
          </Tool>
          <Tool label="Göster/Gizle">
            <Pilcrow />
          </Tool>
          <ComboBox label="Yakınlaştır" value="%191" w={73} lead />
          <Tool label="Word Yardımı">
            <Help />
          </Tool>
          <Separator />
          <ToolButton type="button" $w={49}>
            <Book />
            <span>
              <u>O</u>ku
            </span>
          </ToolButton>
          <Options type="button" aria-label="Standart araç çubuğu seçenekleri">
            <OptionsMark />
          </Options>
        </Toolbar>

        <Toolbar role="toolbar" aria-label="Biçimlendirme">
          <Grip />
          <Tool label="Stiller ve Biçimlendirme">
            <Styles />
          </Tool>
          <ComboBox label="Stil" value="Normal + Kalın, S" w={110} />
          <ComboBox label="Yazı Tipi" value="Times New Roman" w={163} />
          <ComboBox label="Yazı Tipi Boyutu" value="12" w={54} />
          <Separator />
          <Tool label="Kalın" on>
            <SerifGlyph $style="bold">K</SerifGlyph>
          </Tool>
          <Tool label="İtalik">
            <SerifGlyph $style="italic">T</SerifGlyph>
          </Tool>
          <Tool label="Altı Çizili">
            <SerifGlyph $style="underline">A</SerifGlyph>
          </Tool>
          <Separator />
          <Tool label="Sola Hizala" on>
            <Align kind="left" />
          </Tool>
          <Tool label="Ortala">
            <Align kind="center" />
          </Tool>
          <Tool label="Sağa Hizala">
            <Align kind="right" />
          </Tool>
          <Tool label="İki Yana Yasla">
            <Align kind="justify" />
          </Tool>
          <Tool label="Satır Aralığı">
            <LineSpacing />
          </Tool>
          <Drop label="Satır aralığı listesi" />
          <Separator />
          <Tool label="Numaralandırma">
            <Numbering />
          </Tool>
          <Tool label="Madde İşaretleri">
            <Bullets />
          </Tool>
          <Tool label="Girintiyi Azalt">
            <Indent out />
          </Tool>
          <Tool label="Girintiyi Artır">
            <Indent />
          </Tool>
          <Separator />
          <Tool label="Kenarlık">
            <Border />
          </Tool>
          <Drop label="Kenarlık listesi" />
          <Tool label="Vurgu">
            <Highlight />
          </Tool>
          <Drop label="Vurgu listesi" />
          <Tool label="Yazı Tipi Rengi">
            <FontColor />
          </Tool>
          <Drop label="Renk listesi" />
          <Options type="button" aria-label="Biçimlendirme araç çubuğu seçenekleri">
            <OptionsMark />
          </Options>
        </Toolbar>
      </ToolbarRow>

      <Workspace>
        <WorkColumn>
          <RulerRow>
            <TabSelector type="button" aria-label="Sekme türü">
              <Icon w={7} h={7}>
                <path d="M1.500 0v5.500H7" fill="none" stroke="#555" strokeWidth="2" />
              </Icon>
            </TabSelector>
            <HRuler>
              <RulerSlots from={-10} to={76} />
              <Marker $x={176} $y={-1} width="9" height="22" viewBox="0 0 9 22">
                <path d="M.5.500h8v3l-4 4-4-4zM.5 14.500v-3l4-4 4 4v3zM.5 14.500h8v6h-8z" fill="#f4f4f4" stroke="#5a5a5a" />
              </Marker>
              <Marker $x={1407} $y={7} width="9" height="8" viewBox="0 0 9 8">
                <path d="M.5 7.500v-3l4-4 4 4v3z" fill="#f4f4f4" stroke="#5a5a5a" />
              </Marker>
            </HRuler>
          </RulerRow>
          <BodyRow>
            <VRuler>
              <VStrip>
                <RulerSlots vertical from={-8} to={37} />
              </VStrip>
            </VRuler>
            <Page>
              <DocTitle>DERİ HASTALIKLARININ TANISINDA “WOOD” IŞIĞI</DocTitle>
              <Heading>Tanım</Heading>
              <Para>
                “<S>Wood</S>” ışığı, yüksek basınçlı cıva lambalarından çıkan ışığın, %9 oranında nikel oksit içeren baryum
                silikattan yapılmış bir filtreden geçirilmesi ile elde edilir. Bu filtre, yalnız 320-400 <S>nm</S> dalga boyu
                arasında bulunan ışınların geçişine izin verir. “<S>Wood</S>” ışığı incelemesinde temel amaç, normalde çıplak
                gözle görülemeyen bazı maddelerin, <S>floresans</S> verme özelliklerinden yararlanarak görünür hale
                getirilmesidir. <S>Floresans</S>, bir maddenin kısa dalga boylu (görünmez) ışınları soğurması ve kısa bir süre
                sonra uzun dalga boylu (görünür) ışınlar salmasıdır. Deride doğal olarak bulunan <S>elastin</S>,{" "}
                <S>kollajen</S>, <S g>aromatik</S> aminoasitler, <S>melanin</S> öncüleri ve ürünleri gibi bazı maddeler veya
                dış faktörler nedeniyle <S>floresans</S> ortaya çıkabilir.
              </Para>
              <Heading>Gereçler</Heading>
              <Para>
                <b>1</b>-“<S>Wood</S>” ışığı kaynağı
              </Para>
              <Para>
                <b>2</b>-Karanlık oda
              </Para>
              <Heading>Uygulama</Heading>
              <Para>
                <b>1</b>-Hasta, yapılacak işlem konusunda bilgilendirilmeli ve bu ışığın zararlı olmadığı açıklanmalıdır.
              </Para>
              <Para>
                <b>2</b>-“<S>Wood</S>” ışığı incelemesi karanlık bir ortamda yapılmalı, olanaklıysa penceresiz bir oda tercih
                edilmelidir.
              </Para>
              <Para>
                <b>3</b>-Hekim, inceleme öncesi gözlerinin karanlığa uyum sağlaması ve “<S>Wood</S>” lambasının ısınması
                için, yaklaşık bir dakika beklemelidir.
              </Para>
            </Page>
          </BodyRow>
          <BottomRow>
            {views.map((v, i) => (
              <ViewButton key={v.label} type="button" aria-label={v.label} $on={i === 2}>
                <Icon w={10} h={11}>
                  <path d={v.d} fill="none" stroke="#000" />
                </Icon>
              </ViewButton>
            ))}
            <ScrollButton type="button" aria-label="Sola kaydır">
              <Triangle dir="left" />
            </ScrollButton>
            <HThumb>
              <Icon w={9} h={7}>
                <path d="M.5 0v7M3.500 0v7M6.500 0v7" stroke="#555" />
                <path d="M1.500 0v7M4.500 0v7M7.500 0v7" stroke="#fafafa" />
              </Icon>
            </HThumb>
            <ScrollButton type="button" aria-label="Sağa kaydır">
              <Triangle dir="right" />
            </ScrollButton>
          </BottomRow>
        </WorkColumn>
        <VScroll>
          <SplitBox />
          <ScrollButton type="button" aria-label="Yukarı kaydır">
            <Triangle dir="up" />
          </ScrollButton>
          <VThumb>
            <Icon w={7} h={9}>
              <path d="M0 .5h7M0 3.500h7M0 6.500h7" stroke="#444" />
              <path d="M0 1.500h7M0 4.500h7M0 7.500h7" stroke="#fafafa" />
            </Icon>
          </VThumb>
          <Spring />
          <ScrollButton type="button" aria-label="Aşağı kaydır">
            <Triangle dir="down" />
          </ScrollButton>
          <ScrollButton type="button" aria-label="Önceki Sayfa">
            <PageJump kind="prev" />
          </ScrollButton>
          <ScrollButton type="button" aria-label="Gözatma Nesnesi">
            <PageJump kind="browse" />
          </ScrollButton>
          <ScrollButton type="button" aria-label="Sonraki Sayfa">
            <PageJump kind="next" />
          </ScrollButton>
          <BottomRow />
        </VScroll>
      </Workspace>

      <StatusBar>"Wood Işığı": 3.723 karakter (tahmini bir değer).</StatusBar>

      <TaskBar>
        <StartButton type="button" aria-label="Başlat">
          <StartOrb />
        </StartButton>
        <QuickLaunch>
          <ShowDesktop />
          <SwitchWindows />
          <Explorer />
          <MoreButton type="button" aria-label="Diğer">
            <Icon w={10} h={8}>
              <path d="M1.500 1l3 3-3 3M5.500 1l3 3-3 3" fill="none" stroke="#fff" strokeWidth="1.300" />
            </Icon>
          </MoreButton>
        </QuickLaunch>
        {tasks.map((t) => (
          <Task key={t.text} type="button" $active={t.active}>
            {t.icon}
            <span>{t.text}</span>
          </Task>
        ))}
        <Tray>
          <TrayText $gap={14}>TR</TrayText>
          <Icon w={8} h={9}>
            <path d="M6.500 1l-4 3.500 4 3.500" fill="none" stroke="#eee" strokeWidth="2" />
          </Icon>
          <TrayGap $w={3} />
          {trayIcons.map((t) => (
            <Icon key={t.name}>{t.art}</Icon>
          ))}
          <TrayGap $w={8} />
          {systemIcons.map((t) => (
            <Icon key={t.name}>{t.art}</Icon>
          ))}
          <TrayGap $w={1} />
          <TrayText $gap={0}>20:50</TrayText>
        </Tray>
      </TaskBar>
    </Desktop>
  );
}
